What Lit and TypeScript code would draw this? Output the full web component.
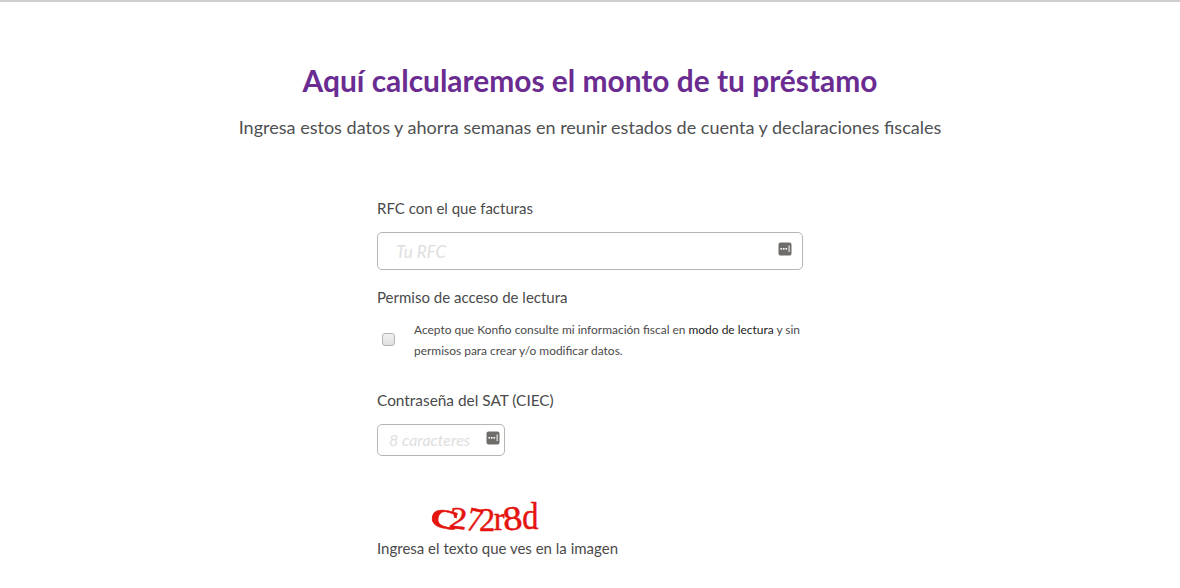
import { LitElement, html, css } from "lit";
import { customElement } from "lit/decorators.js";

const keyIcon = html`<svg class="key" width="14" height="14" viewBox="0 0 14 14" aria-hidden="true">
  <rect x="0.5" y="0.5" width="13" height="13" rx="2" fill="#6f6d6a"></rect>
  <rect x="2.5" y="6" width="1.6" height="1.6" fill="#fff"></rect>
  <rect x="5" y="6" width="1.6" height="1.6" fill="#fff"></rect>
  <rect x="7.5" y="6" width="1.6" height="1.6" fill="#fff"></rect>
  <rect x="10.6" y="3.5" width="1" height="6.5" fill="#fff"></rect>
</svg>`;

const captcha = [
  { ch: "c", w: 18, t: "translate(6px,-3px) rotate(12deg) scale(1.7,1)" },
  { ch: "2", w: 17, t: "translate(1px,0) rotate(6deg) scale(0.95,0.82)" },
  { ch: "7", w: 13, t: "translate(1px,1px) rotate(12deg) scale(0.8,0.9)" },
  { ch: "2", w: 14, t: "translate(0,1px) scale(0.85,0.9)" },
  { ch: "r", w: 11, t: "translate(1px,0) scale(0.85,0.9)" },
  { ch: "8", w: 19, t: "translate(0,0) rotate(-6deg) scale(1.02,0.9)" },
  { ch: "d", w: 16, t: "translate(-1px,-2px) scale(0.85,0.98)" },
];

@customElement("app-root")
export class AppRoot extends LitElement {
  static styles = css`
    :host {
      display: block;
      height: 588px;
      overflow: hidden;
      background: #fff;
      font-family: "Lato", "Noto Sans", sans-serif;
      color: #4a4a4a;
    }
    .page {
      border-top: 2px solid #d0cfcd;
      display: flex;
      flex-direction: column;
      align-items: center;
    }
    h1 {
      margin: 59px 0 0;
      font-size: 29.9px;
      line-height: 38px;
      font-weight: 700;
      color: #6a2c91;
      text-align: center;
    }
    .sub {
      margin: 15px 0 0;
      font-size: 18.05px;
      line-height: 26px;
      color: #4f5152;
      text-align: center;
    }
    form {
      width: 426px;
      margin: 58px 0 0;
      display: flex;
      flex-direction: column;
      align-items: flex-start;
    }
    label, .label {
      font-size: 15px;
      line-height: 20px;
      color: #4a4a4a;
      display: block;
    }
    .field {
      box-sizing: border-box;
      border: 1px solid #b5b5b5;
      border-radius: 5px;
      display: flex;
      align-items: center;
      justify-content: space-between;
      font-style: italic;
      color: #dedede;
      background: #fff;
    }
    .rfc {
      width: 100%;
      height: 38px;
      margin-top: 14px;
      padding: 0 10px 0 18px;
      font-size: 17px;
    }
    .rfc .key { margin-top: -4px; }
    .ciec {
      width: 128px;
      height: 32px;
      margin-top: 14px;
      padding: 0 4px 2px 11px;
      font-size: 16px;
    }
    .ciec .key { margin-top: -3px; }
    .perm { margin-top: 17px; }
    .check {
      display: flex;
      align-items: center;
      margin-top: 12px;
      width: 100%;
    }
    .box {
      box-sizing: border-box;
      width: 13px;
      height: 13px;
      margin: -2px 19px 0 5px;
      flex: none;
      border: 1px solid #b4b4b4;
      border-radius: 3px;
      background: linear-gradient(#f0f0f0, #e0e0e0);
    }
    .check p {
      margin: 0;
      font-size: 11.95px;
      line-height: 21px;
      color: #4a4a4a;
    }
    .check b { font-weight: 400; color: #222; }
    .pass { margin-top: 29px; font-size: 15.4px; }
    .captcha {
      margin: 43px 0 0 53px;
      height: 38px;
      display: flex;
      align-items: center;
      font-family: "Liberation Serif", serif;
      font-size: 38px;
      line-height: 38px;
      color: #e5140f;
      -webkit-text-stroke: 0.5px #e5140f;
    }
    .captcha span {
      display: block;
      text-align: center;
    }
    .img { margin-top: 1px; }
  `;

  render() {
    return html`<div class="page">
      <h1>Aquí calcularemos el monto de tu préstamo</h1>
      <p class="sub">Ingresa estos datos y ahorra semanas en reunir estados de cuenta y declaraciones fiscales</p>
      <form>
        <label>RFC con el que facturas</label>
        <div class="field rfc"><span>Tu RFC</span>${keyIcon}</div>
        <span class="label perm">Permiso de acceso de lectura</span>
        <div class="check">
          <span class="box"></span>
          <p>Acepto que Konfio consulte mi información fiscal en <b>modo de lectura</b> y sin permisos para crear y/o modificar datos.</p>
        </div>
        <label class="pass">Contraseña del SAT (CIEC)</label>
        <div class="field ciec"><span>8 caracteres</span>${keyIcon}</div>
        <div class="captcha">${captcha.map(
          (l) => html`<span style="width:${l.w}px;transform:${l.t}">${l.ch}</span>`
        )}</div>
        <label class="img">Ingresa el texto que ves en la imagen</label>
      </form>
    </div>`;
  }
}
